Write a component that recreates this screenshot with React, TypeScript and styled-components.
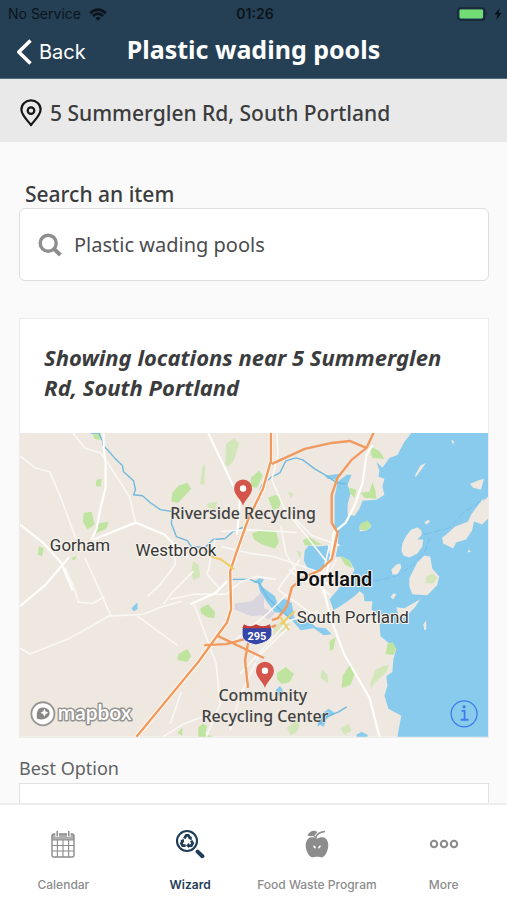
import React from "react";
import styled, { createGlobalStyle } from "styled-components";

const GlobalStyle = createGlobalStyle`
  *, *::before, *::after { box-sizing: border-box; }
  body { margin: 0; background: #fafafa; color: #3b3c3d; font-family: "Noto Sans", sans-serif; }
  button, input { font: inherit; color: inherit; }
`;

const Screen = styled.div`
  display: flex;
  flex-direction: column;
  height: 100vh;
`;

const Header = styled.header`
  flex: none;
  background: #253f54;
  border-bottom: 1px solid #4d6a7c;
`;

const StatusBar = styled.div`
  display: grid;
  grid-template-columns: 1fr auto 1fr;
  align-items: center;
  height: 28px;
  padding: 0 5px 0 8px;
  color: #0b141b;
  font: 400 14px/20px Inter, sans-serif;
`;

const StatusGroup = styled.div<{ $end?: boolean }>`
  display: flex;
  align-items: center;
  gap: ${(p) => (p.$end ? 6 : 8)}px;
  justify-content: ${(p) => (p.$end ? "flex-end" : "flex-start")};
`;

const Clock = styled.time`
  font-weight: 600;
`;

const NavBar = styled.div`
  display: grid;
  grid-template-columns: 1fr auto 1fr;
  align-items: center;
  height: 50px;
  padding: 0 16px 8px;
`;

const BackButton = styled.button`
  display: flex;
  align-items: center;
  justify-self: start;
  gap: 7px;
  padding: 6px 0 0;
  border: 0;
  background: none;
  color: #fff;
  font: 400 20px/28px Inter, sans-serif;
`;

const Title = styled.h1`
  margin: 0;
  color: #fff;
  font-size: 25px;
  line-height: 34px;
  font-weight: 700;
`;

const AddressBar = styled.div`
  flex: none;
  display: flex;
  align-items: center;
  gap: 8px;
  height: 63px;
  padding: 4px 20px 0;
  background: #e9e9e9;
  font-size: 21px;
  line-height: 28px;
  font-weight: 500;
`;

const Content = styled.main`
  flex: 1;
  min-height: 0;
  overflow-y: auto;
  scrollbar-width: none;
  padding: 38px 18px 0 19px;
`;

const SearchLabel = styled.label`
  display: block;
  padding-left: 6px;
  font-size: 21px;
  line-height: 28px;
  font-weight: 500;
`;

const SearchBox = styled.div`
  display: flex;
  align-items: center;
  gap: 11px;
  height: 73px;
  padding: 0 18px;
  border: 1px solid #dedede;
  border-radius: 6px;
  background: #fff;
`;

const SearchInput = styled.input`
  flex: 1;
  min-width: 0;
  padding: 0;
  border: 0;
  outline: 0;
  background: none;
  color: #4b4c50;
  font-size: 20px;
  line-height: 28px;
`;

const Card = styled.section`
  margin-top: 37px;
  border: 1px solid #ececec;
  background: #fff;
`;

const CardHeading = styled.h2`
  margin: 0;
  padding: 23px 24px 31px;
  font-size: 22px;
  line-height: 30px;
  font-weight: 700;
  font-style: italic;
`;

const MapSvg = styled.svg`
  display: block;
  width: 100%;
  height: auto;
`;

const SectionTitle = styled.h3`
  margin: 0;
  padding: 18px 0 3px;
  color: #626365;
  font-size: 18px;
  line-height: 24px;
  font-weight: 400;
`;

const ResultCard = styled.div`
  height: 80px;
  border: 1px solid #e2e2e2;
  background: #fff;
`;

const TabBar = styled.nav`
  flex: none;
  display: grid;
  grid-template-columns: repeat(4, 1fr);
  height: 97px;
  border-top: 2px solid #ededed;
  background: #fff;
`;

const Tab = styled.button<{ $active?: boolean }>`
  display: flex;
  flex-direction: column;
  align-items: center;
  gap: 18px;
  padding: 24px 0 0;
  border: 0;
  background: none;
  color: ${(p) => (p.$active ? "#1f3d56" : "#8c8c8c")};
  font: ${(p) => (p.$active ? 600 : 500)} 12px/16px Inter, sans-serif;
  white-space: nowrap;
`;

const WifiIcon = () => (
  <svg width="18" height="13" viewBox="0 0 18 13" fill="none" stroke="currentColor" strokeWidth="2.6">
    <path d="M1.2 5.2Q9 -2 16.8 5.2M4 8Q9 3.4 14 8" />
    <path d="M6.4 10Q9 7.8 11.6 10L9 12.7Z" fill="currentColor" stroke="none" />
  </svg>
);

const BatteryIcon = () => (
  <svg width="31" height="14" viewBox="0 0 31 14">
    <rect x=".7" y="1" width="27" height="12" rx="3" fill="#253f54" stroke="#142735" strokeWidth="1.3" />
    <rect x="2.5" y="2.6" width="23.5" height="8.8" rx="1.4" fill="#72dc75" />
    <path d="M29.2 5q1.6 2 0 4Z" fill="#142735" />
  </svg>
);

const BoltIcon = () => (
  <svg width="8" height="12" viewBox="0 0 8 12">
    <path d="M5.8 0 .5 6.5h3L2.2 12 7.5 5h-3Z" fill="#081016" />
  </svg>
);

const ChevronIcon = () => (
  <svg width="16" height="26" viewBox="0 0 16 26" fill="none" stroke="currentColor" strokeWidth="3.6">
    <path d="M14.5 1.5 2.8 13l11.7 11.5" strokeLinejoin="round" />
  </svg>
);

const AddressIcon = () => (
  <svg width="22" height="28" viewBox="0 0 22 28" fill="none" stroke="#151515" strokeWidth="2.2">
    <path d="M11 26C8 21.8 1.4 16.5 1.4 10.6a9.6 9.3 0 0 1 19.2 0C20.6 16.5 14 21.8 11 26Z" strokeLinejoin="round" />
    <circle cx="11" cy="11.6" r="3.3" />
  </svg>
);

const SearchIcon = () => (
  <svg width="25" height="24" viewBox="0 0 25 24" fill="none" stroke="#8e8e8e">
    <circle cx="10.2" cy="10.2" r="8" strokeWidth="3.4" />
    <path d="m16 16 6.4 6" strokeWidth="4" />
  </svg>
);

const CalendarIcon = () => (
  <svg width="28" height="30" viewBox="0 0 28 30" fill="none" stroke="currentColor">
    <path d="M3 5h22v6H3z" fill="currentColor" opacity=".7" stroke="none" />
    <rect x="3" y="5" width="22" height="23" rx="2" strokeWidth="1.4" />
    <path d="M3 11h22M3 16.5h22M3 22h22M8.4 11v17M14 11v17M19.6 11v17" strokeWidth="1.1" />
    <path d="M8.2 2v6M19.8 2v6" strokeWidth="3.6" stroke="#fff" />
    <path d="M8.2 2v5.500M19.8 2v5.500" strokeWidth="1.5" />
  </svg>
);

const WizardIcon = () => (
  <svg width="30" height="30" viewBox="0 0 30 30" fill="none" stroke="currentColor">
    <circle cx="12" cy="12" r="10" strokeWidth="2.1" />
    <path d="m22.6 22.6 4.8 4.6" strokeWidth="4" strokeLinecap="round" />
    <g strokeWidth="2.7">
      <path d="m9.2 9.400 2-3h2.1l1.8 2.6" />
      <path d="m7.900 11.400-1.500 3 1.300 2.200h3" />
      <path d="M13.200 16.600h3.200l1.300-2.300-1.500-2.700" />
    </g>
    <g fill="currentColor" stroke="none">
      <path d="m16.800 7.400-.1 4-3.500-1.800Z" />
      <path d="m5.300 11.600 3.400-1.800.5 3.800Z" />
      <path d="m14.100 13.800-3.100 2.800 3.100 2.700Z" />
    </g>
  </svg>
);

const AppleIcon = () => (
  <svg width="28" height="30" viewBox="0 0 28 30" fill="currentColor">
    <path d="M14 9.7c3-1.6 7.300-2.300 9.600.9 3 4.300 1.700 10.900-1.300 15.100-1.800 2.500-3.800 3.100-5.700 2.300-1.400-.5-3.800-.5-5.200 0-1.900.8-3.900.2-5.700-2.300-3-4.200-4.300-10.800-1.300-15.100 2.300-3.200 6.600-2.500 9.600-.9Z" />
    <path d="M4.400 6.600C6.600 2 10.500.6 14.200 2.800 13.300 6.400 9.400 8.300 4.400 6.600Z" />
    <path d="M13 9c.2-3.700 3-6 9-6.600M10 6l3.600 3" fill="none" stroke="currentColor" strokeWidth="1.500" />
    <path d="M10.400 16.300c1.900.3 2.600 1.500 2.200 3.300-1.800-.3-2.500-1.600-2.200-3.300ZM17.600 16.300c-1.900.3-2.600 1.500-2.200 3.300 1.800-.3 2.500-1.600 2.200-3.300Z" fill="#fff" />
  </svg>
);

const MoreIcon = () => (
  <svg width="30" height="30" viewBox="0 0 30 30" fill="none" stroke="currentColor" strokeWidth="2.1">
    <circle cx="5" cy="15" r="3.2" />
    <circle cx="15" cy="15" r="3.2" />
    <circle cx="25" cy="15" r="3.2" />
  </svg>
);

const MapLabel = styled.text<{ $size?: number; $bold?: boolean }>`
  font-family: Roboto, sans-serif;
  font-size: ${(p) => p.$size ?? 17}px;
  font-weight: ${(p) => (p.$bold ? 600 : 400)};
  fill: ${(p) => (p.$bold ? "#101010" : "#343434")};
  stroke: #f8f5f0;
  stroke-width: 2px;
  stroke-linejoin: round;
  paint-order: stroke;
`;

const PlaceLabel = styled.text`
  font-family: "Noto Sans", sans-serif;
  font-size: 16px;
  font-weight: 500;
  text-anchor: middle;
  fill: #414141;
  stroke: #f1ece6;
  stroke-width: 1px;
  paint-order: stroke;
`;

const ShieldText = styled.text`
  font: 700 11px Roboto, sans-serif;
  text-anchor: middle;
  fill: #fff;
`;

const LogoText = styled.text`
  font: 600 21px Lato, sans-serif;
  fill: #fff;
  stroke: #969492;
  stroke-width: 3px;
  stroke-linejoin: round;
  paint-order: stroke;
`;

const Marker = ({ x, y }: { x: number; y: number }) => (
  <g transform={`translate(${x} ${y})`}>
    <path d="M0 0C-1.5-6-9-10.5-9-17.3a9 9 0 0 1 18 0C9-10.5 1.5-6 0 0Z" fill="#d4554b" />
    <circle cy="-17.2" r="3.2" fill="#fff" />
  </g>
);

const AreaMap = () => (
  <MapSvg viewBox="19 433 470 305" role="img" aria-label="Map of recycling locations around Portland">
    <rect x="19" y="433" width="470" height="305" fill="#eee8e0" />
    <g fill="#88cbed">
      <path d="M412 433 405 442 398 455 390 458 383 468 377 462 380 471 379 477 385 479 383 487 385 495 377 500 363 501 360 509 355 516 348 515 348 505 351 493 348 485 352 475 347 475 342 479 338 482 335 497 335 527 339 534 338 548 336 557 344 558 350 561 355 570 350 580 341 587 330 600 334 611 342 606 348 602 356 596 360 592 364 595 365 602 373 602 372 610 377 615 380 623 381 637 388 643 397 650 394 660 393 673 387 677 388 687 385 697 389 710 402 717 400 727 398 738 489 738 489 433Z" />
      <path d="m305 551 4-5 10 1 9-1 3 12-7 10-8 5-8-4-4-8ZM257 580l6 8 12 9 3 8 6-6 8 5 2 14 16 5 7 5 9 1 6 6-8 1-10-7-13 2-8-9-9-8-9-1-7-9-8-12Z" />
      <path d="m131 609 6-6v7l-4 2ZM276 691l4-4 3 4-2 6-5-1ZM318 725l4-10 7-5 6 4-8 6-3 8ZM357 736l5-3 6 3v2h-11ZM253 583l6-4 5 1-3 5ZM325 476l15-2-3 6-9-1Z" />
    </g>
    <g fill="#eee8e0">
      <path d="m403 544 4-8 5-6 6-2 5 3-1 5-4 4 6 0-1 7-5 7-8 4-6-2-2-5Z" />
      <path d="m446 536 10-9 13-5 3-7 11-15 6-3v22l-6 6-8-3-2 9-6 9-10 3-3 6-10-5-1-6Z" />
      <path d="m471 484 10-4 4-1-3 11-8-2ZM416 475l5-9 6-3-5 7-6 8ZM392 570l5-5 4-1 1 4-4 7-5 0ZM410 579l8-16 7-7 6 1 2 12 7 8-2 9-10 10-15-1-3-8ZM397 608l8 1 16-9-6 9-12 11-4-4ZM391 598l3-4 3 1-3 5ZM424 625l3-4v9l-2 1ZM425 523l4-3 2 2-4 3ZM452 440l3 1-1 4ZM469 550l3 2-3 1Z" />
      <path d="m360 526 8-4 4 5-5 4-7 1Z" />
    </g>
    <g fill="#bfe4a0">
      <path d="m92 434 8-1v7l-6-1ZM96 480l5-1-1 8-5-1ZM83 513l8-1 3 13-7 5-5-8ZM94 531l3-7 11-2-2 7-11 5ZM38 547l5 2-2 8-4-2ZM70 559l6-3-2 5ZM172 493l6-7 9-3 4 6-13 14-7-1ZM251 478l8-7 4 5-6 12-7-1ZM268 498l8-3 6 5-3 8-6 2ZM252 534l11-4 13 1 3 12-4 6-13-4-8-5ZM303 541l6-4 9 6 5 2-18 1ZM372 447l8 4 5 8-12-1-2-5ZM361 493l9-1 3-10 3 9 1 8-12-1ZM350 488l7 2-2 8-5-5ZM361 524l7-3 4 5-5 5-7-1ZM200 609l8-4 7 8-1 6-7-1-6-4ZM178 655l9-5 4 7-4 6-10-2ZM277 674l9-6 8 7-4 8-8 2-5-5ZM198 729l4-4 5 2-2 8 8 3h-15ZM388 645l5-2 4 7-3 6-8-1ZM343 677l7-11 5 9-4 11-9 3ZM330 642l6-4-2 12-4 2ZM340 556l10 5 3 8-8-4ZM240 528l6-2 2 5-5 1ZM177 734l5-5v8Z" />
      <path d="m226 444 8-6 5 5-5 17-6 7-3-2ZM202 470l1-6 2 4-1 17-4-1ZM193 562l5 3 2 12-7 4-2-8ZM288 492l6 2-3 4ZM207 504l10-2-2 8-7-2ZM297 551l5 2-2 6ZM341 730l8-5 3 7-7 4ZM287 729l9-7 4 4-3 7-6 4ZM376 671l8-4 6-1-4 8-10 9-5 6 0-5ZM322 670l6 6v8l-7-5ZM427 577l6-3 5 4-4 6-8 0Z" opacity=".6" />
    </g>
    <path d="m235 604 17-2 8-8 4 3v12l12 4-7 7-8-4-10 1-17-7Z" fill="#d9d5df" />
    <path d="m274 628 9-8 8 5-5 6-13 5Z" fill="#dfe2be" />
    <g fill="none" stroke="#72b9df" strokeWidth="1.4" strokeLinejoin="round">
      <path d="M90 433h8l4 8v4l5 5 7 8 8 8 1 6 10 9 2 9-2 5 9 1 8 7 10 7 12 2-1 12 5 13 11 4 4 6 14 1 8-8 12-1 8-7 14-6 3-13 8-15 4-13 10-8 8-4 6-12 10-3 7 2 12 9 12 7 10 7 9 1" />
      <path d="m230 580 20 0 7 3M258 582l10 17 14 13 9 8M318 727l7-8 14-6 8-5" />
    </g>
    <g fill="none" stroke="#70b6e5" strokeWidth=".9" opacity=".7">
      <path d="m425 535 26-7 13-15 24-15M421 530l9 10-4 11-14 16-16 10-30 7" strokeDasharray="8 2" />
    </g>
    <g fill="none" stroke="#faf8f4" strokeWidth="1.6" strokeLinejoin="round">
      <path d="m72 433 12 15 16 5 9 13 20 31 6 26M19 456l15 12 15 4 11 26 15 41M84 558l15 33 12 27M19 649l10 6 38-15 22-12 19-11 35-2 20-8 19-5M137 617l40 29M64 568l9 20 5 15 15 1 11-7M163 605l9-12 21-21M173 545l2 20-15 20-13 12M277 433l1 22-6 25 12 28M284 508l46 58M281 526l5 28 15 25M284 508l28 28 28 10M221 532l26-2 50 3M221 547l30 7 23 3 55 19M215 540l-8 35 13 15M170 600l24-5 32 0 14-12 16-6 20 3M194 605l22 60 4 40-14 33M230 645l37-30 20-20M290 627l-31 30-19 40-10 35M170 725l11-32M163 738l19-12 20-8M240 675l48-53 30-10M300 560l-22 30 40 29M330 545l-6 25-1 25M320 585l-20-5-11-10M337 560l-16 28 10 8" />
    </g>
    <g fill="none" stroke="#fffefa" strokeWidth="2.2" strokeLinejoin="round">
      <path d="M103 433v15l2 15 0 25-5 19-4 22-5 11M93 540l42-17 29 12 23 23M19 525l23 18 18 20 12 28M68 558l-24 28-25 21" />
      <path d="m208 433 18 38 14 29-3 35M373 445l-6 10-4 28-8 23-9 17-12 10-2 18" />
      <path d="m333 550-8 30M324 590l6 25 5 15 10 26 25 43 10 39M190 605l25-11 12-12M310 582l28 4" />
    </g>
    <g fill="none" stroke="#fff8ed" strokeWidth="4.500">
      <path d="M271 433v28l-8 28-15 31-13 37-5 15 1 38-4 13-29 40-62 75" />
    </g>
    <g fill="none" stroke="#f19a60" strokeWidth="2.400" strokeLinejoin="round">
      <path d="M271 433v28l-8 28-15 31-13 37-5 15 1 38-4 13-29 40-62 75M272 464l33-15 27-6 18-2 17 7 7-15M367 448l-15 12-14 18-6 17v28l6 10-6 27-12 11-16 7-12 10-5 19-9 12-6 2M204 646l22-1 22-6 28-13M218 637l46 22M248 644l-3 17 3 28" />
    </g>
    <path d="m208 556 13 4 13 10M280 617l9 14M281 625l14-13" fill="none" stroke="#efce63" strokeWidth="2" />

    <MapLabel x="49" y="552">Gorham</MapLabel>
    <MapLabel x="135" y="557">Westbrook</MapLabel>
    <MapLabel x="296" y="587" $size={20} $bold>Portland</MapLabel>
    <MapLabel x="297" y="624">South Portland</MapLabel>

    <path d="M244 625q6 4 12 0 7 4 14 0l2 5v6q-2 7-16 10-14-3-14-10v-6Z" fill="#3546a7" stroke="#f8f7f5" />
    <path d="M244 625q6 4 12 0 7 4 14 0l1 4h-29Z" fill="#c83d38" />
    <ShieldText x="257" y="641">295</ShieldText>

    <Marker x={243} y={506} />
    <PlaceLabel x="243" y="519">Riverside Recycling</PlaceLabel>
    <Marker x={265} y={689} />
    <PlaceLabel>
      <tspan x="265" y="702">Community </tspan>
      <tspan x="265" y="723">Recycling Center</tspan>
    </PlaceLabel>

    <circle cx="42" cy="715" r="11.6" fill="#fff" stroke="#969492" strokeWidth="1.8" />
    <path d="M36 720c-1-10 3-12 8-11 6 1 6 8 2 10-3 2-6 2-10 1Z" fill="#898887" />
    <path d="m43.500 710 1.300 2.700 2.700 1.300-2.700 1.300-1.300 2.700-1.300-2.700-2.700-1.300 2.700-1.300Z" fill="#fff" />
    <LogoText x="57" y="721">mapbox</LogoText>

    <g fill="none" stroke="#3e7cec" strokeWidth="1.3">
      <circle cx="465" cy="715" r="13" />
      <path d="M462.500 712h3v9m-4 0h8" strokeWidth="1.800" />
      <circle cx="465" cy="708" r="1.600" fill="#3e7cec" stroke="none" />
    </g>
  </MapSvg>
);

const tabs = [
  { label: "Calendar", icon: <CalendarIcon /> },
  { label: "Wizard", icon: <WizardIcon />, active: true },
  { label: "Food Waste Program", icon: <AppleIcon /> },
  { label: "More", icon: <MoreIcon /> },
];

export default function App() {
  return (
    <Screen>
      <GlobalStyle />
      <Header>
        <StatusBar>
          <StatusGroup>No Service <WifiIcon /></StatusGroup>
          <Clock>01:26</Clock>
          <StatusGroup $end><BatteryIcon /><BoltIcon /></StatusGroup>
        </StatusBar>
        <NavBar>
          <BackButton type="button"><ChevronIcon />Back</BackButton>
          <Title>Plastic wading pools</Title>
        </NavBar>
      </Header>
      <AddressBar><AddressIcon />5 Summerglen Rd, South Portland</AddressBar>
      <Content>
        <SearchLabel htmlFor="item-search">Search an item</SearchLabel>
        <SearchBox>
          <SearchIcon />
          <SearchInput id="item-search" type="text" defaultValue="Plastic wading pools" />
        </SearchBox>
        <Card>
          <CardHeading>Showing locations near 5 Summerglen Rd, South Portland</CardHeading>
          <AreaMap />
        </Card>
        <SectionTitle>Best Option</SectionTitle>
        <ResultCard />
      </Content>
      <TabBar aria-label="Main">
        {tabs.map((tab) => (
          <Tab key={tab.label} type="button" $active={tab.active} aria-current={tab.active ? "page" : undefined}>
            {tab.icon}
            {tab.label}
          </Tab>
        ))}
      </TabBar>
    </Screen>
  );
}
